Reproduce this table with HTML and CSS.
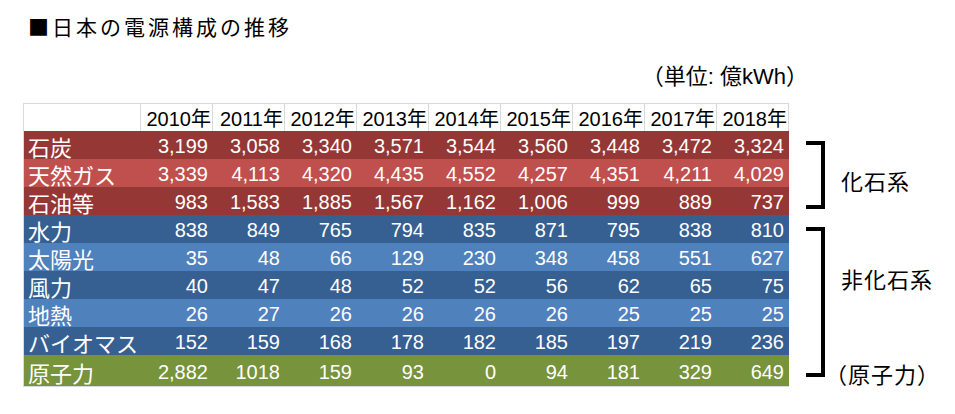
FILE: index.html
```html
<!DOCTYPE html>
<html lang="ja">
<head>
<meta charset="utf-8">
<title>日本の電源構成の推移</title>
<link rel="stylesheet" href="styles.css">
</head>
<body>
<div class="page">
  <h1 class="title">■日本の電源構成の推移</h1>
  <div class="unit">（単位: 億kWh）</div>
  <div class="main">
    <div class="grid">
      <div class="row head">
        <div class="lab"></div>
        <div>2010年</div><div>2011年</div><div>2012年</div><div>2013年</div><div>2014年</div><div>2015年</div><div>2016年</div><div>2017年</div><div>2018年</div>
      </div>
      <div class="row dred">
        <div class="lab">石炭</div>
        <div>3,199</div><div>3,058</div><div>3,340</div><div>3,571</div><div>3,544</div><div>3,560</div><div>3,448</div><div>3,472</div><div>3,324</div>
      </div>
      <div class="row lred">
        <div class="lab">天然ガス</div>
        <div>3,339</div><div>4,113</div><div>4,320</div><div>4,435</div><div>4,552</div><div>4,257</div><div>4,351</div><div>4,211</div><div>4,029</div>
      </div>
      <div class="row dred">
        <div class="lab">石油等</div>
        <div>983</div><div>1,583</div><div>1,885</div><div>1,567</div><div>1,162</div><div>1,006</div><div>999</div><div>889</div><div>737</div>
      </div>
      <div class="row dblue">
        <div class="lab">水力</div>
        <div>838</div><div>849</div><div>765</div><div>794</div><div>835</div><div>871</div><div>795</div><div>838</div><div>810</div>
      </div>
      <div class="row lblue">
        <div class="lab">太陽光</div>
        <div>35</div><div>48</div><div>66</div><div>129</div><div>230</div><div>348</div><div>458</div><div>551</div><div>627</div>
      </div>
      <div class="row dblue">
        <div class="lab">風力</div>
        <div>40</div><div>47</div><div>48</div><div>52</div><div>52</div><div>56</div><div>62</div><div>65</div><div>75</div>
      </div>
      <div class="row lblue">
        <div class="lab">地熱</div>
        <div>26</div><div>27</div><div>26</div><div>26</div><div>26</div><div>26</div><div>25</div><div>25</div><div>25</div>
      </div>
      <div class="row dblue">
        <div class="lab">バイオマス</div>
        <div>152</div><div>159</div><div>168</div><div>178</div><div>182</div><div>185</div><div>197</div><div>219</div><div>236</div>
      </div>
      <div class="row green">
        <div class="lab">原子力</div>
        <div>2,882</div><div>1018</div><div>159</div><div>93</div><div>0</div><div>94</div><div>181</div><div>329</div><div>649</div>
      </div>
    </div>
    <div class="side">
      <div class="group g1">
        <div class="bracket"></div>
        <div class="labels"><span class="fossil">化石系</span></div>
      </div>
      <div class="group g2">
        <div class="bracket"></div>
        <div class="labels">
          <span class="nonfossil">非化石系</span>
          <span class="nuclear">（原子力）</span>
        </div>
      </div>
    </div>
  </div>
</div>
</body>
</html>
```

FILE: styles.css
```css
html, body {
  margin: 0;
  padding: 0;
  background: #ffffff;
}

body {
  font-family: "Liberation Sans", "Noto Sans CJK JP", sans-serif;
  color: #000000;
}

.page {
  width: 955px;
  height: 414px;
  overflow: hidden;
}

.title {
  margin: 13px 0 0 28px;
  height: 26px;
  line-height: 26px;
  font-size: 21px;
  font-weight: normal;
  letter-spacing: 3px;
  font-family: "Noto Sans CJK JP", sans-serif;
}

.unit {
  margin-top: 26px;
  width: 808px;
  height: 24px;
  line-height: 24px;
  text-align: right;
  font-size: 22px;
  font-family: "Liberation Sans", "Noto Sans CJK JP", sans-serif;
}

.main {
  display: flex;
  align-items: flex-start;
  margin-top: 14px;
}

.grid {
  margin-left: 23px;
  display: grid;
  grid-template-columns: 117px repeat(9, 72px);
  grid-template-rows: repeat(9, 28px) 31px;
  border-left: 1px solid #d9d9d9;
  border-bottom: 1px solid #d9d9d9;
}

.row {
  display: contents;
}

.row > div {
  box-sizing: border-box;
  display: flex;
  align-items: center;
  justify-content: flex-end;
  padding: 2px 5px 0 0;
  font-size: 20px;
  line-height: 24px;
  color: #ffffff;
  white-space: nowrap;
}

.row > .lab {
  justify-content: flex-start;
  padding: 2px 0 0 4px;
  font-size: 22px;
  font-family: "Noto Sans CJK JP", sans-serif;
}

.head > div {
  color: #000000;
  background: #ffffff;
  border-top: 1px solid #d9d9d9;
  border-right: 1px solid #d9d9d9;
  padding: 3px 1px 0 0;
  font-size: 20px;
}

.dred > div { background: #953735; }
.lred > div { background: #c0504d; }
.dblue > div { background: #366092; }
.lblue > div { background: #4f81bd; }
.green > div { background: #77933c; }

.side {
  margin-left: 17px;
  margin-top: 28px;
  display: flex;
  flex-direction: column;
  font-family: "Noto Sans CJK JP", sans-serif;
  font-size: 22px;
}

.group {
  display: flex;
}

.g1 {
  height: 84px;
}

.g2 {
  height: 171px;
}

.bracket {
  box-sizing: border-box;
  width: 19px;
  border: 4px solid #000000;
  border-left: none;
}

.g1 .bracket {
  margin-top: 10px;
  height: 68px;
}

.g2 .bracket {
  margin-top: 12px;
  height: 150px;
}

.labels {
  display: flex;
  flex-direction: column;
  align-items: flex-start;
  margin-left: 16px;
  line-height: 22px;
  letter-spacing: 1px;
}

.fossil {
  margin-top: 38px;
}

.nonfossil {
  margin-top: 52px;
}

.nuclear {
  margin-top: 73px;
  margin-left: -16px;
}
```
